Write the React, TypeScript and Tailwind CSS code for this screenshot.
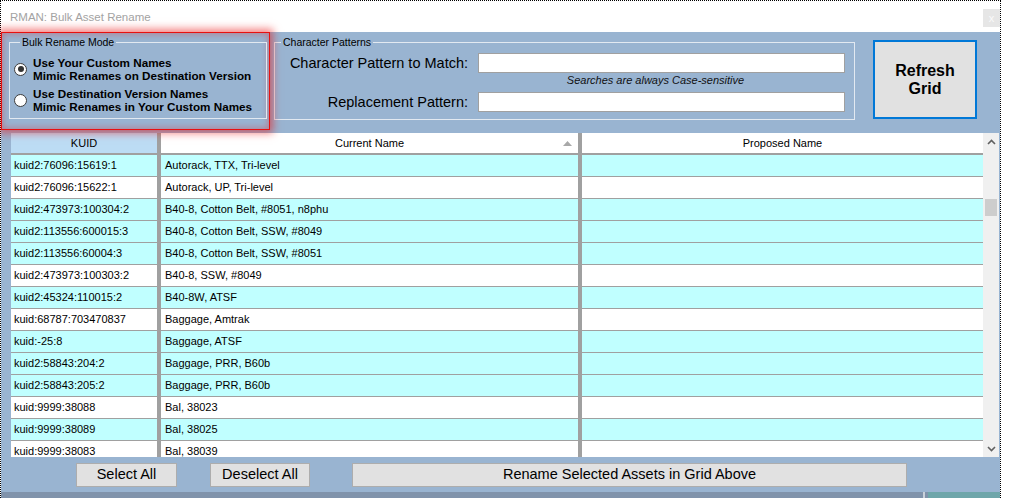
import React from 'react';

type Row = { kuid: string; name: string; cyan: boolean };

const ROWS: Row[] = [
  { kuid: 'kuid2:76096:15619:1', name: 'Autorack, TTX, Tri-level', cyan: true },
  { kuid: 'kuid2:76096:15622:1', name: 'Autorack, UP, Tri-level', cyan: false },
  { kuid: 'kuid2:473973:100304:2', name: 'B40-8, Cotton Belt, #8051, n8phu', cyan: true },
  { kuid: 'kuid2:113556:600015:3', name: 'B40-8, Cotton Belt, SSW, #8049', cyan: true },
  { kuid: 'kuid2:113556:60004:3', name: 'B40-8, Cotton Belt, SSW, #8051', cyan: true },
  { kuid: 'kuid2:473973:100303:2', name: 'B40-8, SSW, #8049', cyan: false },
  { kuid: 'kuid2:45324:110015:2', name: 'B40-8W, ATSF', cyan: true },
  { kuid: 'kuid:68787:703470837', name: 'Baggage, Amtrak', cyan: false },
  { kuid: 'kuid:-25:8', name: 'Baggage, ATSF', cyan: true },
  { kuid: 'kuid2:58843:204:2', name: 'Baggage, PRR, B60b', cyan: true },
  { kuid: 'kuid2:58843:205:2', name: 'Baggage, PRR, B60b', cyan: true },
  { kuid: 'kuid:9999:38088', name: 'Bal, 38023', cyan: false },
  { kuid: 'kuid:9999:38089', name: 'Bal, 38025', cyan: true },
  { kuid: 'kuid:9999:38083', name: 'Bal, 38039', cyan: false },
];

const Radio = ({ checked }: { checked?: boolean }) => (
  <span className="w-[13px] h-[13px] rounded-full border border-[#3c3c3c] bg-white flex items-center justify-center shrink-0">
    {checked && <span className="w-[6px] h-[6px] rounded-full bg-[#333]" />}
  </span>
);

const Chevron = ({ down }: { down?: boolean }) => (
  <svg width="9" height="6" viewBox="0 0 9 6">
    <polyline
      points={down ? '1,1 4.5,4.5 8,1' : '1,5 4.5,1.5 8,5'}
      fill="none"
      stroke="#606060"
      strokeWidth="1.6"
    />
  </svg>
);

const WinButton = ({ label, w }: { label: string; w: string }) => (
  <div className={`${w} h-[24px] bg-[#e1e1e1] border border-[#adadad] flex items-center justify-center text-[14.5px] text-black`}>
    {label}
  </div>
);

const App: React.FC = () => {
  return (
    <div className="w-[1010px] h-[498px] bg-white overflow-hidden font-['Liberation_Sans',Arial,sans-serif]">
      <div className="w-[1001px] h-[498px] border-l border-t border-r border-dotted border-black flex flex-col">
        {/* title bar */}
        <div className="h-[31px] bg-white flex items-start justify-between pl-[9px]">
          <span className="mt-[9px] text-[11.5px] leading-[14px] text-[#a3a3a3]">RMAN: Bulk Asset Rename</span>
          <div className="mt-[8px] w-[17px] h-[18px] bg-[#e6e6e6] flex items-center justify-center text-[11px] text-[#fafafa]">x</div>
        </div>

        {/* client area */}
        <div className="h-[460px] bg-[#99b4d1] flex flex-col">
          <div className="h-[101px] flex items-start">
            {/* highlighted mode group */}
            <div className="relative z-10 w-[269px] h-[98px] border border-[#e81010] shadow-[0_0_8px_3px_rgba(235,20,20,0.55),inset_0_0_6px_1px_rgba(235,20,20,0.35)]">
              <fieldset className="ml-[7px] mt-[3px] w-[258px] border border-[#e2e9f1] pl-[4px] pt-[8px] pb-[5px]">
                <legend className="ml-[6px] px-[2px] text-[10.5px] leading-[12px] text-black">Bulk Rename Mode</legend>
                <div className="flex flex-col gap-[5px]">
                  <div className="flex items-center gap-[6px]">
                    <Radio checked />
                    <div className="text-[11.7px] leading-[13px] font-bold text-black">
                      <div>Use Your Custom Names</div>
                      <div>Mimic Renames on Destination Version</div>
                    </div>
                  </div>
                  <div className="flex items-center gap-[6px]">
                    <Radio />
                    <div className="text-[11.7px] leading-[13px] font-bold text-black">
                      <div>Use Destination Version Names</div>
                      <div>Mimic Renames in Your Custom Names</div>
                    </div>
                  </div>
                </div>
              </fieldset>
            </div>

            {/* character patterns group */}
            <fieldset className="ml-[4px] mt-[4px] w-[581px] border border-[#e2e9f1] pt-[5px] pb-[7px]">
              <legend className="ml-[6px] px-[2px] text-[10.5px] leading-[12px] text-black">Character Patterns</legend>
              <div className="flex items-center gap-[10px]">
                <span className="w-[193px] text-right text-[14.5px] leading-[20px] text-black">Character Pattern to Match:</span>
                <div className="w-[367px] h-[20px] bg-white border border-[#a0a0a0]" />
              </div>
              <div className="flex gap-[10px] mt-[1px]">
                <span className="w-[193px]" />
                <span className="w-[367px] pr-[12px] text-center italic text-[11px] leading-[12px] text-[#111]">
                  Searches are always Case-sensitive
                </span>
              </div>
              <div className="flex items-center gap-[10px] mt-[6px]">
                <span className="w-[193px] text-right text-[14.5px] leading-[20px] text-black">Replacement Pattern:</span>
                <div className="w-[367px] h-[20px] bg-white border border-[#a0a0a0]" />
              </div>
            </fieldset>

            <div className="ml-[18px] mt-[8px] w-[104px] h-[79px] bg-[#e1e1e1] border-2 border-[#0078d7] flex items-center justify-center text-center font-bold text-[16px] leading-[18px] text-black">
              Refresh<br />Grid
            </div>
          </div>

          {/* grid */}
          <div className="ml-[10px] w-[988px] h-[324px] flex">
            <div className="w-[972px] h-[324px] overflow-hidden flex flex-col bg-white">
              <div className="flex gap-[4px] bg-[#a0a0a0] pb-[2px]">
                <div className="w-[146px] h-[20px] bg-[#bcdcf4] flex items-center justify-center text-[11px] text-black">KUID</div>
                <div className="relative w-[417px] h-[20px] bg-white flex items-center justify-center text-[11px] text-black">
                  Current Name
                  <svg className="absolute right-[6px] top-[8px]" width="9" height="5" viewBox="0 0 9 5">
                    <polygon points="0,5 4.5,0 9,5" fill="#a8a8a8" />
                  </svg>
                </div>
                <div className="w-[401px] h-[20px] bg-white flex items-center justify-center text-[11px] text-black">Proposed Name</div>
              </div>
              {ROWS.map((r) => (
                <div key={r.kuid} className="flex gap-[4px] bg-[#a0a0a0] pb-[1px] shrink-0">
                  <div className={`w-[146px] h-[21px] pl-[3px] flex items-center text-[11px] text-black whitespace-nowrap ${r.cyan ? 'bg-[#c0ffff]' : 'bg-white'}`}>
                    {r.kuid}
                  </div>
                  <div className={`w-[417px] h-[21px] pl-[4px] flex items-center text-[11px] text-black whitespace-nowrap ${r.cyan ? 'bg-[#c0ffff]' : 'bg-white'}`}>
                    {r.name}
                  </div>
                  <div className={`w-[401px] h-[21px] ${r.cyan ? 'bg-[#c0ffff]' : 'bg-white'}`} />
                </div>
              ))}
            </div>
            {/* scrollbar */}
            <div className="w-[16px] h-[324px] bg-[#f0f0f0] flex flex-col">
              <div className="h-[17px] flex items-center justify-center"><Chevron /></div>
              <div className="mt-[49px] mx-[2px] h-[17px] bg-[#cdcdcd]" />
              <div className="flex-1" />
              <div className="h-[17px] flex items-center justify-center"><Chevron down /></div>
            </div>
          </div>

          {/* bottom buttons */}
          <div className="mt-[6px] flex">
            <div className="ml-[75px]"><WinButton label="Select All" w="w-[101px]" /></div>
            <div className="ml-[33px]"><WinButton label="Deselect All" w="w-[100px]" /></div>
            <div className="ml-[42px]"><WinButton label="Rename Selected Assets in Grid Above" w="w-[555px]" /></div>
          </div>
        </div>

        {/* lower strip */}
        <div className="h-[6px] flex">
          <div className="flex-1 bg-[#8093ab]" />
          <div className="w-[2px] bg-[#c9d1da]" />
          <div className="w-[3px] bg-[#8093ab]" />
          <div className="w-[72px] bg-[#6ea6aa]" />
        </div>
      </div>
    </div>
  );
};

export default App;
